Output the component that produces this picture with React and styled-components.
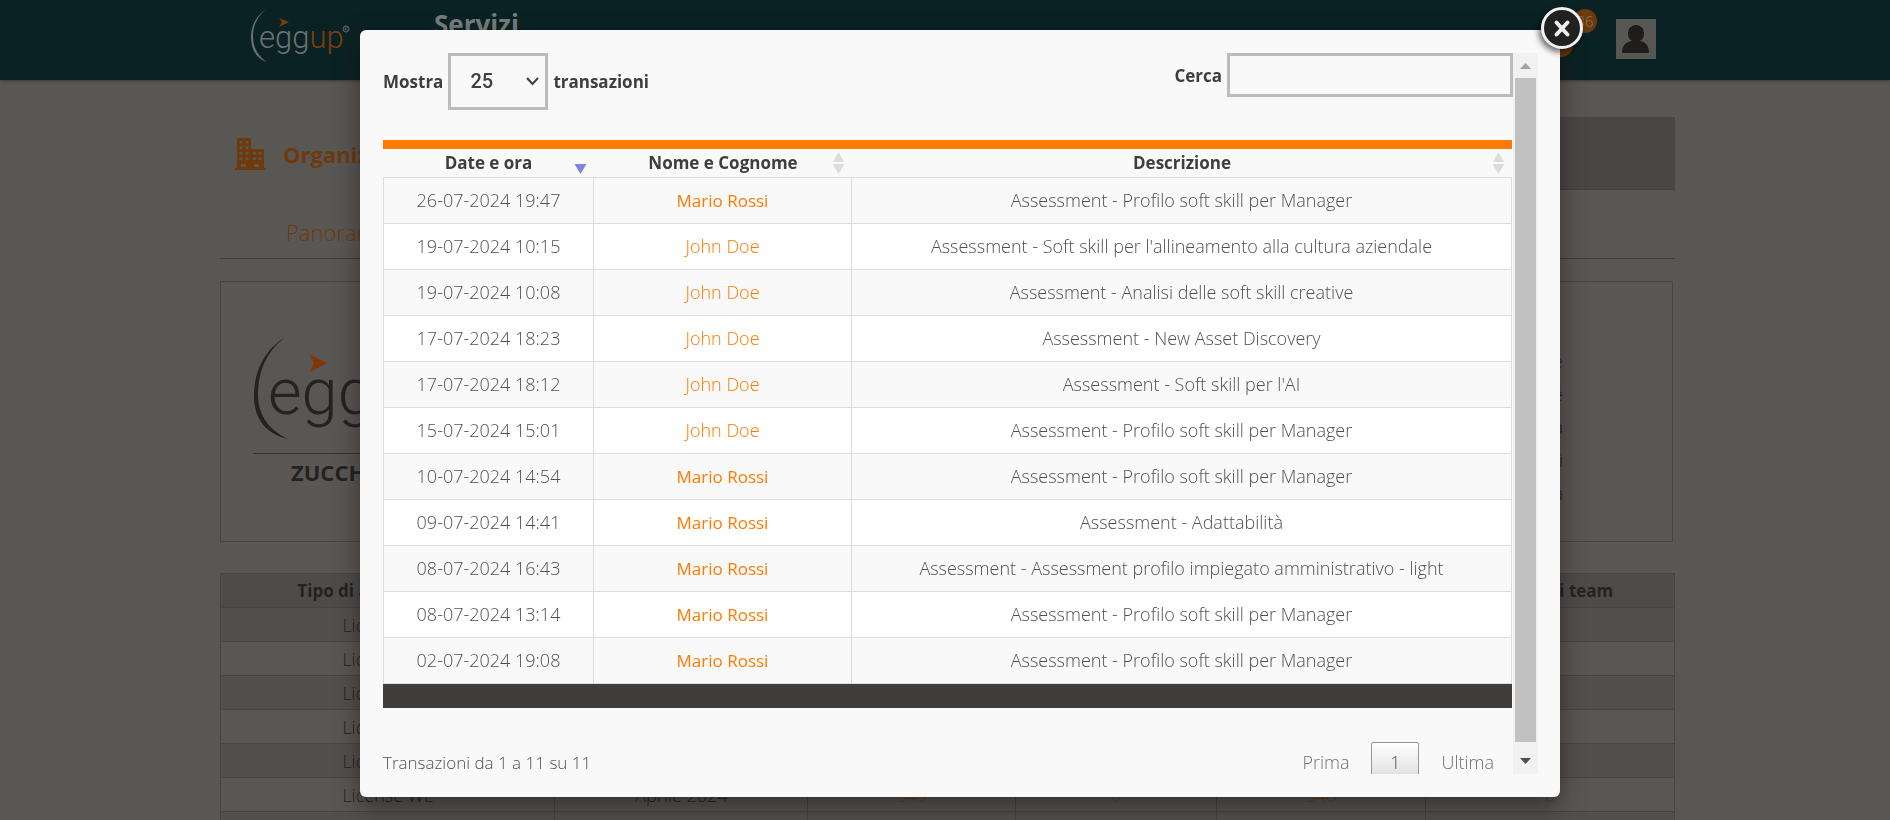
import React, { useState } from "react";
import styled, { createGlobalStyle, css } from "styled-components";

const colors = {
  accent: "#ff7a00",
  header: "#0b2224",
  page: "#595754",
  pageLine: "#474543",
  pageHead: "#4e4c4a",
  pageText: "#242222",
  pageAccent: "#6e3a0c",
  modal: "#f9f9f9",
  line: "#dcdcdc",
  text: "#505050",
  heading: "#3f3e3c",
};

const GlobalStyle = createGlobalStyle`
  * {
    box-sizing: border-box;
  }

  body {
    margin: 0;
    overflow: hidden;
    background: ${colors.page};
    font-family: "Open Sans", "Noto Sans", sans-serif;
    font-size: 18px;
    font-weight: 300;
  }

  button,
  input,
  select {
    font: inherit;
  }
`;

const Page = styled.div`
  height: 100vh;
  overflow: hidden;
  color: ${colors.pageText};
`;

const Container = styled.div`
  width: 100%;
  max-width: 1460px;
  margin: 0 auto;
  padding-left: 5px;
`;

const TopBar = styled.header`
  height: 80px;
  background: ${colors.header};
  box-shadow: 0 1px 3px #3a3836;
`;

const TopBarContent = styled(Container)`
  display: flex;
  align-items: flex-start;
  padding-right: 19px;
  padding-left: 36px;
`;

const PageTitle = styled.h1`
  margin: 6px auto 0 83px;
  color: #777c7c;
  font-size: 26px;
  font-weight: 700;
  line-height: 36px;
`;

const Badges = styled.div`
  display: flex;
  flex-direction: column;
  margin: 9px 19px 0 0;
`;

const Badge = styled.span`
  width: 24px;
  height: 24px;
  margin-left: ${({ $inset }) => ($inset ? "0" : "24px")};
  border-radius: 50%;
  background: ${colors.pageAccent};
  color: #857468;
  font-size: 15px;
  line-height: 24px;
  text-align: center;
`;

const Avatar = styled.svg`
  width: 40px;
  height: 40px;
  margin-top: 19px;
  background: ${colors.page};
`;

const SectionHead = styled.div`
  display: flex;
  align-items: center;
  gap: 16px;
  height: 73px;
  margin-top: 37px;
  padding-left: 15px;
`;

const SectionTitle = styled.h2`
  flex: 1;
  margin: 0;
  color: ${colors.pageAccent};
  font-size: 22px;
  font-weight: 700;
`;

const SectionBox = styled.div`
  width: 300px;
  height: 100%;
  background: #494745;
  border-bottom: 1px solid #42403e;
`;

const Tabs = styled.nav`
  display: flex;
  height: 69px;
  padding: 26px 0 0 66px;
  border-bottom: 1px solid #3f3d3b;
  line-height: 32px;

  a {
    color: ${colors.pageAccent};
    font-size: 22px;
    text-decoration: none;
  }
`;

const Card = styled.section`
  display: flex;
  justify-content: space-between;
  height: 261px;
  margin: 22px 2px 31px 0;
  padding: 55px 109px 0 32px;
  border: 1px solid ${colors.pageLine};
`;

const CompanyData = styled.ul`
  margin: 8px 0 0;
  padding: 0;
  list-style: none;
  line-height: 33px;
  text-align: right;
`;

const LicenseTable = styled.table`
  width: 100%;
  border-collapse: collapse;
  table-layout: fixed;
  text-align: center;

  th,
  td {
    height: 34px;
    padding: 0;
    border: 1px solid ${colors.pageLine};
    line-height: 24px;
  }

  th {
    background: ${colors.pageHead};
    font-size: 17px;
    font-weight: 700;
  }

  th + th {
    border-left-color: ${colors.pageHead};
  }

  td {
    font-size: 18px;
  }

  tbody tr:nth-child(odd) {
    background: #52504d;
  }

  td:nth-child(n + 3) {
    color: ${colors.pageAccent};
  }
`;

const Overlay = styled.div`
  position: fixed;
  inset: 0;
  display: flex;
  justify-content: center;
  padding: 30px 0 23px 30px;
`;

const Modal = styled.div`
  position: relative;
  display: flex;
  width: min(1200px, 100% - 60px);
  padding: 23px 22px 23px 23px;
  border-radius: 6px;
  background: ${colors.modal};
  box-shadow: 0 10px 25px rgba(20, 12, 18, 0.5);
  color: ${colors.text};
`;

const CloseButton = styled.button`
  position: absolute;
  top: -26px;
  right: -26px;
  width: 48px;
  height: 48px;
  padding: 0;
  border: 0;
  background: none;
  cursor: pointer;

  svg {
    display: block;
    overflow: visible;
    filter: drop-shadow(-2px 3px 3px rgba(0, 0, 0, 0.6));
  }
`;

const ScrollArea = styled.div`
  flex: 1;
  min-width: 0;
  overflow: hidden;
`;

const ScrollBar = styled.div`
  display: flex;
  flex-direction: column;
  align-items: center;
  width: 25px;
  background: #f1f1f1;

  svg {
    width: 11px;
    height: 6px;
  }
`;

const ScrollArrow = styled.div`
  display: flex;
  align-items: ${({ $down }) => ($down ? "flex-start" : "center")};
  height: ${({ $down }) => ($down ? "32px" : "25px")};
  padding-top: ${({ $down }) => ($down ? "16px" : "0")};
  color: ${({ $down }) => ($down ? "#505050" : "#a3a3a3")};
`;

const ScrollThumb = styled.div`
  flex: 1;
  width: 21px;
  background: #c1c1c1;
`;

const Toolbar = styled.div`
  display: flex;
  align-items: flex-start;
  justify-content: space-between;
  margin-bottom: 30px;
`;

const Field = styled.label`
  display: flex;
  align-items: center;
  gap: 5px;
  color: ${colors.heading};
  font-size: 17px;
  font-weight: 700;
`;

const control = css`
  border: 3px solid #bcbcbc;
  border-radius: 0;
  background: ${colors.modal};
  color: ${colors.heading};
`;

const SelectBox = styled.span`
  display: grid;
  align-items: center;

  & > * {
    grid-area: 1 / 1;
  }

  svg {
    justify-self: end;
    margin-right: 9px;
    pointer-events: none;
  }
`;

const LengthSelect = styled.select`
  ${control}
  width: 100px;
  height: 57px;
  padding: 0 19px 2px;
  appearance: none;
  font-family: Roboto, sans-serif;
  font-size: 20px;
  font-weight: 500;
`;

const SearchInput = styled.input`
  ${control}
  width: 286px;
  height: 44px;
  padding: 0 10px;
`;

const Table = styled.table`
  width: calc(100% - 1px);
  border-top: 9px solid ${colors.accent};
  border-collapse: separate;
  border-spacing: 0;
  table-layout: fixed;
  text-align: center;
`;

const Col = styled.col`
  width: ${({ $width }) => $width};
`;

const HeadCell = styled.th`
  height: 29px;
  padding: 0;
  border-bottom: 1px solid ${colors.line};
`;

const SortButton = styled.button`
  display: grid;
  grid-template-columns: 20px 1fr 20px;
  align-items: center;
  width: 100%;
  height: 28px;
  padding: 0 4px;
  border: 0;
  background: none;
  color: ${colors.heading};
  font-size: 17px;
  font-weight: 700;
  line-height: 26px;
  cursor: pointer;

  span {
    grid-column: 2;
  }

  svg {
    justify-self: center;
  }
`;

const Row = styled.tr`
  &:nth-child(even) {
    background: #ffffff;
  }
`;

const Cell = styled.td`
  height: 46px;
  padding: 0 0 1px;
  border-right: 1px solid ${colors.line};
  border-bottom: 1px solid ${colors.line};
  line-height: 24px;

  &:first-child {
    border-left: 1px solid ${colors.line};
  }
`;

const NameLink = styled.a`
  color: ${colors.accent};
  font-size: ${({ $strong }) => ($strong ? "17px" : "18px")};
  font-weight: ${({ $strong }) => ($strong ? 400 : 300)};
  text-decoration: none;
`;

const TableFoot = styled.div`
  height: 24px;
  margin-right: 1px;
  background: ${colors.heading};
`;

const Footer = styled.div`
  display: flex;
  align-items: center;
  justify-content: space-between;
  height: 40px;
  margin-top: 34px;
  font-size: 17px;
`;

const Pagination = styled.div`
  display: flex;
  align-items: center;
  gap: 22px;
  padding-right: 19px;
  font-size: 18px;
`;

const PageButton = styled.button`
  height: 40px;
  padding: 0;
  border: 0;
  background: none;
  color: #707070;
  cursor: pointer;

  ${({ $current }) =>
    $current &&
    css`
      width: 48px;
      border: 1px solid #979797;
      border-radius: 2px;
      background: linear-gradient(#ffffff, #dcdcdc);
      color: ${colors.text};
    `}
`;

const LogoText = styled.text`
  font-family: Roboto, sans-serif;
  font-weight: 300;
`;

const CompanyName = styled.text`
  font-size: 22px;
  font-weight: 700;
`;

const HeaderLogo = () => (
  <svg width="100" height="72" viewBox="0 0 100 72">
    <path d="M15 9C5 16 0 26 0 37c0 13 6 22 16 25C8 57 2 49 2 36 2 25 7 16 15 9z" fill="#6b7273" />
    <LogoText x="8" y="48" fontSize="31" fill="#6b7273">
      egg
      <tspan fill="#7a3d0e">up</tspan>
    </LogoText>
    <path d="M28 18l10 4-10 5 3-5z" fill="#7a3d0e" />
    <circle cx="95" cy="29" r="3" fill="none" stroke="#5e6768" />
    <path d="M94 31v-4h1.500a1 1 0 0 1 0 2H94m1.500 0 1 2" fill="none" stroke="#5e6768" strokeWidth="0.6" />
  </svg>
);

const CompanyLogo = () => (
  <svg width="200" height="160" viewBox="0 0 200 160">
    <path d="M31 1C12 13 1 34 1 59c0 24 13 38 34 43C18 94 5 80 5 58 5 33 14 15 31 1z" fill="#242222" />
    <LogoText x="15" y="77" fontSize="65" fill="#242222">
      egg
      <tspan fill="#7a3308">up</tspan>
    </LogoText>
    <path d="M56 17l18 9-17 9 4-9z" fill="#843506" />
    <path d="M0 116.500h190" stroke="#353332" />
    <CompanyName x="38" y="144" fill="#242222">
      ZUCCHETTI
    </CompanyName>
  </svg>
);

const BuildingsIcon = () => (
  <svg width="32" height="32" viewBox="0 0 32 32" fill={colors.pageAccent}>
    <path
      fillRule="evenodd"
      d="M2 0h14v11h13v19h2v2H0v-2h2zM4.500 3v2.500h3V3zm6 0v2.500h3V3zm-6 5.500V11h3V8.500zm6 0V11h3V8.500zM4.500 14v2.500h3V14zm6 0v2.500h3V14zm-6 5.500V22h3v-2.500zm6 0V22h3v-2.500zM18 14v2.500h3V14zm5.500 0v2.500h3V14zM18 19.500V22h3v-2.500zm5.500 0V22h3v-2.500zM6 26v3h5v-3zm13 0v3h5v-3z"
    />
  </svg>
);

const SortIcon = ({ active }) => (
  <svg width="13" height="22" viewBox="0 0 13 22">
    {!active && <path d="M6.500 0l5.500 10H1z" fill="#dcdcdc" />}
    <path d="M.5 12h12L6.500 22z" fill={active ? "#8083e0" : "#dcdcdc"} />
  </svg>
);

const CloseIcon = () => (
  <svg width="48" height="48" viewBox="0 0 48 48">
    <circle cx="24" cy="24" r="19.500" fill="#212121" stroke="#f1f1f1" strokeWidth="3" />
    <path d="M18.500 18.500l11 12m0-12l-11 12" stroke="#eeeeee" strokeWidth="4" strokeLinecap="round" />
  </svg>
);

const transactions = [
  ["26-07-2024 19:47", "Mario Rossi", "Assessment - Profilo soft skill per Manager"],
  ["19-07-2024 10:15", "John Doe", "Assessment - Soft skill per l'allineamento alla cultura aziendale"],
  ["19-07-2024 10:08", "John Doe", "Assessment - Analisi delle soft skill creative"],
  ["17-07-2024 18:23", "John Doe", "Assessment - New Asset Discovery"],
  ["17-07-2024 18:12", "John Doe", "Assessment - Soft skill per l'AI"],
  ["15-07-2024 15:01", "John Doe", "Assessment - Profilo soft skill per Manager"],
  ["10-07-2024 14:54", "Mario Rossi", "Assessment - Profilo soft skill per Manager"],
  ["09-07-2024 14:41", "Mario Rossi", "Assessment - Adattabilità"],
  ["08-07-2024 16:43", "Mario Rossi", "Assessment - Assessment profilo impiegato amministrativo - light"],
  ["08-07-2024 13:14", "Mario Rossi", "Assessment - Profilo soft skill per Manager"],
  ["02-07-2024 19:08", "Mario Rossi", "Assessment - Profilo soft skill per Manager"],
];

const licenses = Array.from({ length: 6 }, () => ["License WL", "Aprile 2024", "549", "0", "546", "0"]);

const Background = () => (
  <Page>
    <TopBar>
      <TopBarContent>
        <HeaderLogo />
        <PageTitle>Servizi</PageTitle>
        <Badges>
          <Badge>36</Badge>
          <Badge $inset />
        </Badges>
        <Avatar viewBox="0 0 40 40" role="img" aria-label="Profilo">
          <path d="M12 14a8 8 0 0 1 16 0c0 4-1 6-4 8 6 1 9 5 9 12H6c0-7 3-11 10-12-3-2-4-4-4-8z" fill="#1f1d1b" />
        </Avatar>
      </TopBarContent>
    </TopBar>
    <Container>
      <SectionHead>
        <BuildingsIcon />
        <SectionTitle>Organizzazione</SectionTitle>
        <SectionBox />
      </SectionHead>
      <Tabs>
        <a href="#panoramica">Panoramica</a>
      </Tabs>
      <Card>
        <CompanyLogo />
        <CompanyData>
          <li>Sede</li>
          <li>Settore</li>
          <li>Persona</li>
          <li>Servizi</li>
          <li>Azienda</li>
        </CompanyData>
      </Card>
      <LicenseTable>
        <colgroup>
          <Col $width="23%" />
          <Col $width="17.4%" />
          <Col $width="14.3%" />
          <Col $width="13.8%" />
          <Col $width="14.4%" />
          <Col />
        </colgroup>
        <thead>
          <tr>
            <th>Tipo di abbonamento</th>
            <th>Scadenza</th>
            <th>Acquistati</th>
            <th>Utilizzati</th>
            <th>Disponibili</th>
            <th>Crediti di team</th>
          </tr>
        </thead>
        <tbody>
          {licenses.map((license, i) => (
            <tr key={i}>
              {license.map((value, j) => (
                <td key={j}>{value}</td>
              ))}
            </tr>
          ))}
          <tr>
            {licenses[0].map((_, j) => (
              <td key={j} />
            ))}
          </tr>
        </tbody>
      </LicenseTable>
    </Container>
  </Page>
);

const App = () => {
  const [length, setLength] = useState("25");
  const [query, setQuery] = useState("");

  const rows = transactions.filter((row) => row.join(" ").toLowerCase().includes(query.toLowerCase()));

  return (
    <>
      <GlobalStyle />
      <Background />
      <Overlay>
        <Modal role="dialog" aria-label="Transazioni">
          <ScrollArea>
            <Toolbar>
              <Field>
                Mostra
                <SelectBox>
                  <LengthSelect value={length} onChange={(e) => setLength(e.target.value)}>
                    <option>10</option>
                    <option>25</option>
                    <option>50</option>
                  </LengthSelect>
                  <svg width="13" height="9" viewBox="0 0 13 9" fill="none" stroke={colors.heading} strokeWidth="2">
                    <path d="M1 1l5.500 6L12 1" />
                  </svg>
                </SelectBox>
                transazioni
              </Field>
              <Field>
                Cerca
                <SearchInput type="search" value={query} onChange={(e) => setQuery(e.target.value)} />
              </Field>
            </Toolbar>
            <Table>
              <colgroup>
                <Col $width="211px" />
                <Col $width="258px" />
                <Col />
              </colgroup>
              <thead>
                <tr>
                  {["Date e ora", "Nome e Cognome", "Descrizione"].map((title, i) => (
                    <HeadCell key={title}>
                      <SortButton>
                        <span>{title}</span>
                        <SortIcon active={i === 0} />
                      </SortButton>
                    </HeadCell>
                  ))}
                </tr>
              </thead>
              <tbody>
                {rows.map(([date, name, description]) => (
                  <Row key={date}>
                    <Cell>{date}</Cell>
                    <Cell>
                      <NameLink href="#utente" $strong={name === "Mario Rossi"}>
                        {name}
                      </NameLink>
                    </Cell>
                    <Cell>{description}</Cell>
                  </Row>
                ))}
              </tbody>
            </Table>
            <TableFoot />
            <Footer>
              <span>
                Transazioni da 1 a {rows.length} su {transactions.length}
              </span>
              <Pagination>
                <PageButton>Prima</PageButton>
                <PageButton $current>1</PageButton>
                <PageButton>Ultima</PageButton>
              </Pagination>
            </Footer>
          </ScrollArea>
          <ScrollBar>
            <ScrollArrow>
              <svg viewBox="0 0 11 6" fill="currentColor">
                <path d="M5.500 0L11 6H0z" />
              </svg>
            </ScrollArrow>
            <ScrollThumb />
            <ScrollArrow $down>
              <svg viewBox="0 0 11 6" fill="currentColor">
                <path d="M0 0h11L5.500 6z" />
              </svg>
            </ScrollArrow>
          </ScrollBar>
          <CloseButton aria-label="Chiudi">
            <CloseIcon />
          </CloseButton>
        </Modal>
      </Overlay>
    </>
  );
};

export default App;
